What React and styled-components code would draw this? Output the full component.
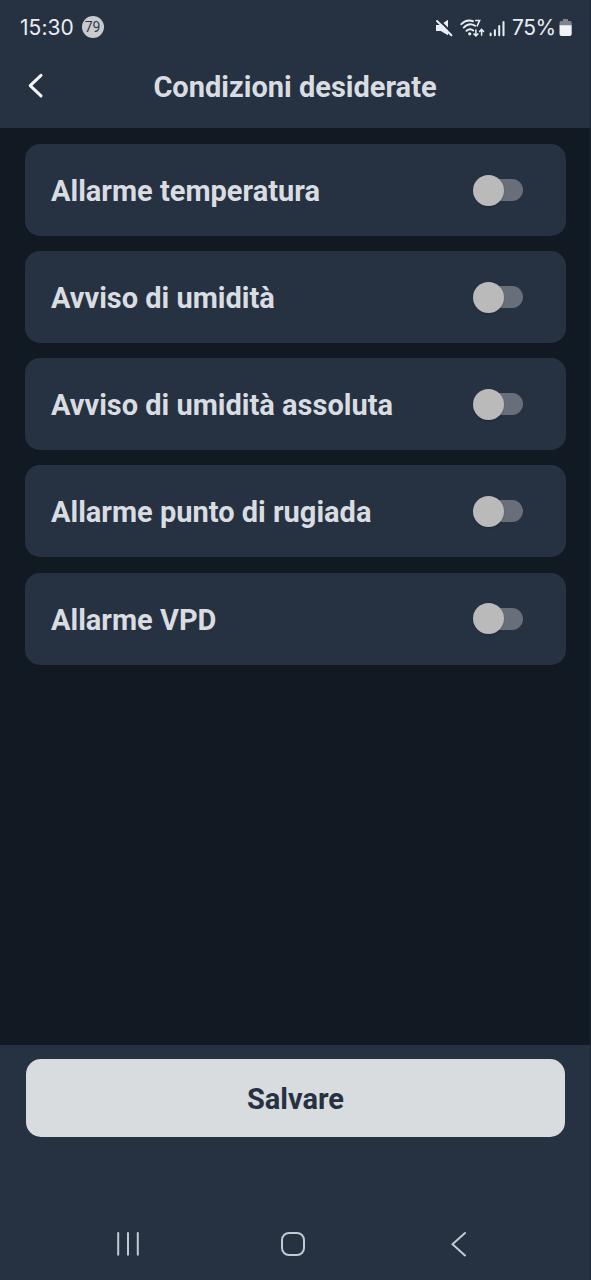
import React from "react";
import styled, { createGlobalStyle } from "styled-components";

const Global = createGlobalStyle`
  *, *::before, *::after { box-sizing: border-box; }
  html, body { margin: 0; height: 100%; background: #111923; }
  #root { height: 100%; }
`;

const Screen = styled.div`
  display: flex;
  flex-direction: column;
  width: 100%;
  height: 1280px;
  overflow: hidden;
  background: #111923;
  color: #d9dde2;
  font-family: Roboto, "Liberation Sans", sans-serif;
  border-right: 1px solid #1b2533;
`;

const TopArea = styled.header`
  height: 128px;
  background: #263241;
`;

const StatusBar = styled.div`
  display: flex;
  align-items: center;
  justify-content: space-between;
  height: 55px;
  padding: 0 18px 0 20px;
`;

const StatusGroup = styled.div`
  display: flex;
  align-items: center;
`;

const Clock = styled.span`
  width: 61.5px;
  font-family: Inter, Roboto, sans-serif;
  font-size: 21px;
  line-height: 24px;
  letter-spacing: 0.05px;
  color: #e9edf4;
`;

const Badge = styled.span`
  display: flex;
  align-items: center;
  justify-content: center;
  width: 22px;
  height: 22px;
  margin-bottom: 1px;
  border-radius: 50%;
  background: #c9cbd0;
  color: #35393f;
  font-size: 14px;
  line-height: 22px;
`;

const Percent = styled.span`
  width: 47px;
  font-family: Inter, Roboto, sans-serif;
  font-size: 21px;
  line-height: 24px;
  letter-spacing: -0.45px;
  color: #e9edf4;
`;

const TitleBar = styled.div`
  display: grid;
  grid-template-columns: 72px 1fr 72px;
  align-items: center;
  height: 63px;
`;

const IconButton = styled.button`
  display: flex;
  align-items: center;
  justify-content: center;
  padding: 0;
  border: 0;
  background: none;
  color: inherit;
`;

const Title = styled.h1`
  margin: 0;
  text-align: center;
  font-size: 29px;
  font-weight: 700;
  line-height: 36px;
  white-space: nowrap;
`;

const List = styled.main`
  flex: 1;
  display: flex;
  flex-direction: column;
  gap: 15.15px;
  padding: 16px 24px 0 25px;
`;

const Card = styled.section`
  display: flex;
  align-items: center;
  justify-content: space-between;
  height: 92px;
  padding: 0 43px 0 26px;
  border-radius: 15px;
  background: #263241;
`;

const Label = styled.span`
  font-size: 29px;
  font-weight: 700;
  line-height: 36px;
  padding-top: 2px;
  white-space: nowrap;
`;

const Track = styled.button`
  display: flex;
  align-items: center;
  width: 46px;
  height: 22px;
  padding: 0;
  border: 0;
  border-radius: 11px;
  background: #686f7a;
`;

const Thumb = styled.span`
  flex: none;
  width: 31px;
  height: 31px;
  margin-left: -4px;
  border-radius: 50%;
  background: #bababa;
  box-shadow: 0 1px 2px rgba(0, 0, 0, 0.2);
`;

const Footer = styled.footer`
  display: flex;
  flex-direction: column;
  justify-content: space-between;
  height: 235px;
  padding-top: 13.5px;
  background: #263241;
`;

const SaveButton = styled.button`
  height: 78.5px;
  margin: 0 25px 0 26px;
  padding: 3px 0 0;
  border: 0;
  border-radius: 15px;
  background: #d9dcdf;
  color: #263142;
  font-family: inherit;
  font-size: 29px;
  font-weight: 700;
`;

const NavBar = styled.nav`
  display: flex;
  align-items: center;
  gap: 141px;
  height: 72px;
  padding-left: 116px;
`;

const Switch = () => (
  <Track type="button" role="switch" aria-checked="false">
    <Thumb />
  </Track>
);

const StatusIcons = () => (
  <svg width="78" height="26" viewBox="434 14 78 26" fill="none">
    <path d="M436 24h4.2l7.8-5.2v15.4l-7.3-4.2H436z" fill="#e9edf4" />
    <path d="M438.2 18.2l14.6 14.6" stroke="#263241" strokeWidth="2" />
    <path d="M437 20l14.4 14.2" stroke="#e9edf4" strokeWidth="2" strokeLinecap="round" />
    <g stroke="#e9edf4" strokeWidth="1.9" strokeLinecap="round">
      <path d="M461.3 23.2C464.6 19.8 469.3 18.9 473 20.2" />
      <path d="M463.7 26.6c3.4-3.5 7.6-4.1 11.4-1.9" />
      <path d="M466.5 29.8c2.3-2 4.8-2 6.8-.3" />
    </g>
    <circle cx="469.7" cy="32.8" r="1.6" fill="#e9edf4" />
    <path d="M475.2 19.5h4.4l-2.7 6" stroke="#e9edf4" strokeWidth="1.6" />
    <path d="M475.9 28.5v6.3m-2.4-2.4 2.4 2.5 2.4-2.5M481.6 34.8v-6.3m-2.4 2.4 2.4-2.5 2.4 2.5" stroke="#e9edf4" strokeWidth="1.5" />
    <path d="M490.6 32.6v1.6M494.9 29.3v4.9M499.2 25v9.2M503.5 21v13.2" stroke="#e9edf4" strokeWidth="2" strokeLinecap="round" />
  </svg>
);

const Battery = () => (
  <svg width="13" height="20" viewBox="559 18 13 20">
    <path d="M563 19h5v2h2a1.7 1.7 0 0 1 1.7 1.7V26h-12.2v-3.3A1.7 1.7 0 0 1 561.2 21H563z" fill="#7f858e" />
    <path d="M559.5 25.3h12.2V34a2 2 0 0 1-2 2h-8.2a2 2 0 0 1-2-2z" fill="#f1f3f5" />
  </svg>
);

const alarms = [
  "Allarme temperatura",
  "Avviso di umidità",
  "Avviso di umidità assoluta",
  "Allarme punto di rugiada",
  "Allarme VPD",
];

export default function App() {
  return (
    <>
      <Global />
      <Screen>
        <TopArea>
          <StatusBar>
            <StatusGroup>
              <Clock>15:30</Clock>
              <Badge>79</Badge>
            </StatusGroup>
            <StatusGroup>
              <StatusIcons />
              <Percent>75%</Percent>
              <Battery />
            </StatusGroup>
          </StatusBar>
          <TitleBar>
            <IconButton aria-label="Indietro">
              <svg width="20" height="28" viewBox="0 0 20 28" fill="none">
                <path d="M15 2.3 4.2 12.6 15 22.9" stroke="#f4f6f9" strokeWidth="3" strokeLinecap="round" strokeLinejoin="round" />
              </svg>
            </IconButton>
            <Title>Condizioni desiderate</Title>
          </TitleBar>
        </TopArea>
        <List>
          {alarms.map((name) => (
            <Card key={name}>
              <Label>{name}</Label>
              <Switch />
            </Card>
          ))}
        </List>
        <Footer>
          <SaveButton type="button">Salvare</SaveButton>
          <NavBar>
            <IconButton aria-label="Recenti">
              <svg width="24" height="26" viewBox="0 0 24 26">
                <path d="M2.2 2v21.8M12 2v21.8M21.8 2v21.8" stroke="#c1c9d3" strokeWidth="2" strokeLinecap="round" />
              </svg>
            </IconButton>
            <IconButton aria-label="Home">
              <svg width="24" height="26" viewBox="1 0 24 26" fill="none">
                <rect x="2" y="2" width="22" height="22" rx="7" stroke="#c1c9d3" strokeWidth="2" />
              </svg>
            </IconButton>
            <IconButton aria-label="Indietro">
              <svg width="20" height="26" viewBox="0 0 20 26" fill="none">
                <path d="M19 2 6.5 13.2 19 24.4" stroke="#c1c9d3" strokeWidth="2" strokeLinecap="round" />
              </svg>
            </IconButton>
          </NavBar>
        </Footer>
      </Screen>
    </>
  );
}
